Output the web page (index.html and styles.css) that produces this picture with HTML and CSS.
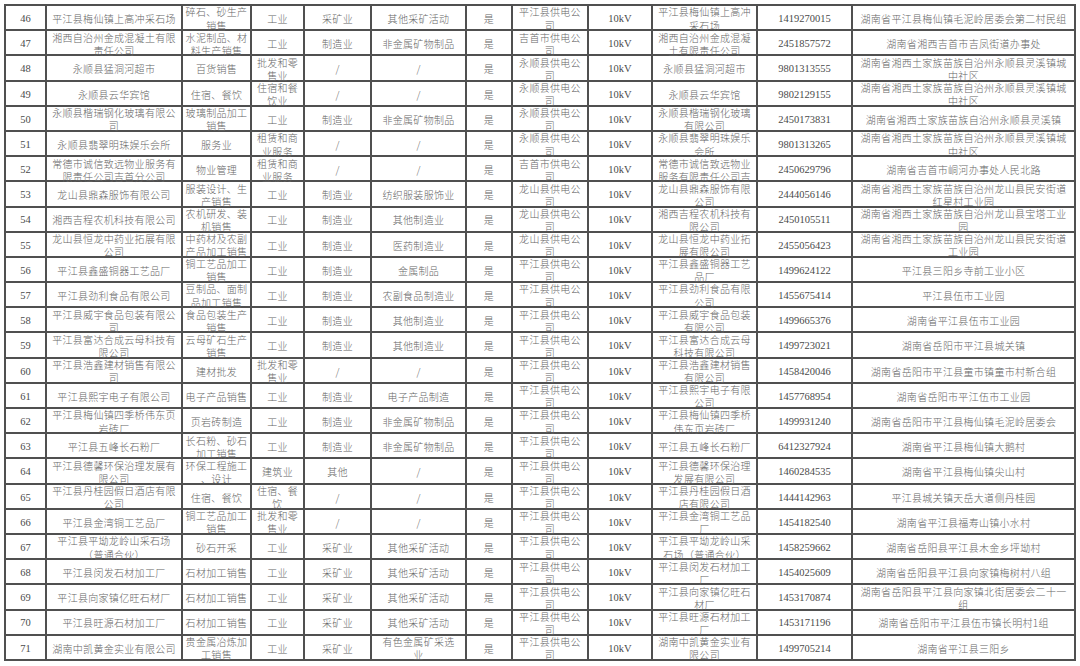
FILE: index.html
```html
<!DOCTYPE html>
<html lang="zh-CN">
<head>
<meta charset="utf-8">
<title>用户名单</title>
<link rel="stylesheet" href="styles.css">
</head>
<body>
<div class="sheet">
<div class="grid">
<div class="n">46</div><div>平江县梅仙镇上高冲采石场</div><div>碎石、砂生产<br>销售</div><div>工业</div><div>采矿业</div><div>其他采矿活动</div><div>是</div><div>平江县供电公<br>司</div><div class="n">10kV</div><div>平江县梅仙镇上高冲<br>采石场</div><div class="n">1419270015</div><div>湖南省平江县梅仙镇毛泥岭居委会第二村民组</div>
<div class="n">47</div><div>湘西自治州金成混凝土有限<br>责任公司</div><div>水泥制品、材<br>料生产销售</div><div>工业</div><div>制造业</div><div>非金属矿物制品</div><div>是</div><div>吉首市供电公<br>司</div><div class="n">10kV</div><div>湘西自治州金成混凝<br>土有限责任公司</div><div class="n">2451857572</div><div>湖南省湘西吉首市吉凤街道办事处</div>
<div class="n">48</div><div>永顺县猛洞河超市</div><div>百货销售</div><div>批发和零<br>售业</div><div>/</div><div>/</div><div>是</div><div>永顺县供电公<br>司</div><div class="n">10kV</div><div>永顺县猛洞河超市</div><div class="n">9801313555</div><div>湖南省湘西土家族苗族自治州永顺县灵溪镇城<br>中社区</div>
<div class="n">49</div><div>永顺县云华宾馆</div><div>住宿、餐饮</div><div>住宿和餐<br>饮业</div><div>/</div><div>/</div><div>是</div><div>永顺县供电公<br>司</div><div class="n">10kV</div><div>永顺县云华宾馆</div><div class="n">9802129155</div><div>湖南省湘西土家族苗族自治州永顺县灵溪镇城<br>中社区</div>
<div class="n">50</div><div>永顺县楷瑞钢化玻璃有限公<br>司</div><div>玻璃制品加工<br>销售</div><div>工业</div><div>制造业</div><div>非金属矿物制品</div><div>是</div><div>永顺县供电公<br>司</div><div class="n">10kV</div><div>永顺县楷瑞钢化玻璃<br>有限公司</div><div class="n">2450173831</div><div>湖南省湘西土家族苗族自治州永顺县灵溪镇</div>
<div class="n">51</div><div>永顺县翡翠明珠娱乐会所</div><div>服务业</div><div>租赁和商<br>业服务</div><div>/</div><div>/</div><div>是</div><div>永顺县供电公<br>司</div><div class="n">10kV</div><div>永顺县翡翠明珠娱乐<br>会所</div><div class="n">9801313265</div><div>湖南省湘西土家族苗族自治州永顺县灵溪镇城<br>中社区</div>
<div class="n">52</div><div>常德市诚信致远物业服务有<br>限责任公司吉首分公司</div><div>物业管理</div><div>租赁和商<br>业服务</div><div>/</div><div>/</div><div>是</div><div>吉首市供电公<br>司</div><div class="n">10kV</div><div>常德市诚信致远物业<br>服务有限责任公司吉</div><div class="n">2450629796</div><div>湖南省吉首市峒河办事处人民北路</div>
<div class="n">53</div><div>龙山县鼎森服饰有限公司</div><div>服装设计、生<br>产销售</div><div>工业</div><div>制造业</div><div>纺织服装服饰业</div><div>是</div><div>龙山县供电公<br>司</div><div class="n">10kV</div><div>龙山县鼎森服饰有限<br>公司</div><div class="n">2444056146</div><div>湖南省湘西土家族苗族自治州龙山县民安街道<br>红星村工业园</div>
<div class="n">54</div><div>湘西吉程农机科技有限公司</div><div>农机研发、装<br>机销售</div><div>工业</div><div>制造业</div><div>其他制造业</div><div>是</div><div>龙山县供电公<br>司</div><div class="n">10kV</div><div>湘西吉程农机科技有<br>限公司</div><div class="n">2450105511</div><div>湖南省湘西土家族苗族自治州龙山县宝塔工业<br>园</div>
<div class="n">55</div><div>龙山县恒龙中药业拓展有限<br>公司</div><div>中药材及农副<br>产品加工销售</div><div>工业</div><div>制造业</div><div>医药制造业</div><div>是</div><div>龙山县供电公<br>司</div><div class="n">10kV</div><div>龙山县恒龙中药业拓<br>展有限公司</div><div class="n">2455056423</div><div>湖南省湘西土家族苗族自治州龙山县民安街道<br>工业园</div>
<div class="n">56</div><div>平江县鑫盛铜器工艺品厂</div><div>铜工艺品加工<br>销售</div><div>工业</div><div>制造业</div><div>金属制品</div><div>是</div><div>平江县供电公<br>司</div><div class="n">10kV</div><div>平江县鑫盛铜器工艺<br>品厂</div><div class="n">1499624122</div><div>平江县三阳乡寺前工业小区</div>
<div class="n">57</div><div>平江县劲利食品有限公司</div><div>豆制品、面制<br>品加工销售</div><div>工业</div><div>制造业</div><div>农副食品制造业</div><div>是</div><div>平江县供电公<br>司</div><div class="n">10kV</div><div>平江县劲利食品有限<br>公司</div><div class="n">1455675414</div><div>平江县伍市工业园</div>
<div class="n">58</div><div>平江县威宇食品包装有限公<br>司</div><div>食品包装生产<br>销售</div><div>工业</div><div>制造业</div><div>其他制造业</div><div>是</div><div>平江县供电公<br>司</div><div class="n">10kV</div><div>平江县威宇食品包装<br>有限公司</div><div class="n">1499665376</div><div>湖南省平江县伍市工业园</div>
<div class="n">59</div><div>平江县富达合成云母科技有<br>限公司</div><div>云母矿石生产<br>销售</div><div>工业</div><div>制造业</div><div>其他制造业</div><div>是</div><div>平江县供电公<br>司</div><div class="n">10kV</div><div>平江县富达合成云母<br>科技有限公司</div><div class="n">1499723021</div><div>湖南省岳阳市平江县城关镇</div>
<div class="n">60</div><div>平江县浩鑫建材销售有限公<br>司</div><div>建材批发</div><div>批发和零<br>售业</div><div>/</div><div>/</div><div>是</div><div>平江县供电公<br>司</div><div class="n">10kV</div><div>平江县浩鑫建材销售<br>有限公司</div><div class="n">1458420046</div><div>湖南省岳阳市平江县童市镇童市村新合组</div>
<div class="n">61</div><div>平江县熙宇电子有限公司</div><div>电子产品销售</div><div>工业</div><div>制造业</div><div>电子产品制造</div><div>是</div><div>平江县供电公<br>司</div><div class="n">10kV</div><div>平江县熙宇电子有限<br>公司</div><div class="n">1457768954</div><div>湖南省岳阳市平江伍市工业园</div>
<div class="n">62</div><div>平江县梅仙镇四季桥伟东页<br>岩砖厂</div><div>页岩砖制造</div><div>工业</div><div>制造业</div><div>非金属矿物制品</div><div>是</div><div>平江县供电公<br>司</div><div class="n">10kV</div><div>平江县梅仙镇四季桥<br>伟东页岩砖厂</div><div class="n">1499931240</div><div>湖南省岳阳市平江县梅仙镇毛泥岭居委会</div>
<div class="n">63</div><div>平江县五峰长石粉厂</div><div>长石粉、砂石<br>加工销售</div><div>工业</div><div>制造业</div><div>非金属矿物制品</div><div>是</div><div>平江县供电公<br>司</div><div class="n">10kV</div><div>平江县五峰长石粉厂</div><div class="n">6412327924</div><div>湖南省平江县梅仙镇大鹅村</div>
<div class="n">64</div><div>平江县德馨环保治理发展有<br>限公司</div><div>环保工程施工<br>、设计</div><div>建筑业</div><div>其他</div><div>/</div><div>是</div><div>平江县供电公<br>司</div><div class="n">10kV</div><div>平江县德馨环保治理<br>发展有限公司</div><div class="n">1460284535</div><div>湖南省平江县梅仙镇尖山村</div>
<div class="n">65</div><div>平江县丹桂园假日酒店有限<br>公司</div><div>住宿、餐饮</div><div>住宿、餐<br>饮</div><div>/</div><div>/</div><div>是</div><div>平江县供电公<br>司</div><div class="n">10kV</div><div>平江县丹桂园假日酒<br>店有限公司</div><div class="n">1444142963</div><div>平江县城关镇天岳大道侧丹桂园</div>
<div class="n">66</div><div>平江县金湾铜工艺品厂</div><div>铜工艺品加工<br>销售</div><div>批发和零<br>售业</div><div>/</div><div>/</div><div>是</div><div>平江县供电公<br>司</div><div class="n">10kV</div><div>平江县金湾铜工艺品<br>厂</div><div class="n">1454182540</div><div>湖南省平江县福寿山镇小水村</div>
<div class="n">67</div><div>平江县平坳龙岭山采石场<br>（普通合伙）</div><div>砂石开采</div><div>工业</div><div>采矿业</div><div>其他采矿活动</div><div>是</div><div>平江县供电公<br>司</div><div class="n">10kV</div><div>平江县平坳龙岭山采<br>石场（普通合伙）</div><div class="n">1458259662</div><div>湖南省岳阳县平江县木金乡坪坳村</div>
<div class="n">68</div><div>平江县闵发石材加工厂</div><div>石材加工销售</div><div>工业</div><div>采矿业</div><div>其他采矿活动</div><div>是</div><div>平江县供电公<br>司</div><div class="n">10kV</div><div>平江县闵发石材加工<br>厂</div><div class="n">1454025609</div><div>湖南省岳阳县平江县向家镇梅树村八组</div>
<div class="n">69</div><div>平江县向家镇亿旺石材厂</div><div>石材加工销售</div><div>工业</div><div>采矿业</div><div>其他采矿活动</div><div>是</div><div>平江县供电公<br>司</div><div class="n">10kV</div><div>平江县向家镇亿旺石<br>材厂</div><div class="n">1453170874</div><div>湖南省岳阳县平江县向家镇北街居委会二十一<br>组</div>
<div class="n">70</div><div>平江县旺源石材加工厂</div><div>石材加工销售</div><div>工业</div><div>采矿业</div><div>其他采矿活动</div><div>是</div><div>平江县供电公<br>司</div><div class="n">10kV</div><div>平江县旺源石材加工<br>厂</div><div class="n">1453171196</div><div>湖南省岳阳市平江县伍市镇长明村1组</div>
<div class="n">71</div><div>湖南中凯黄金实业有限公司</div><div>贵金属冶炼加<br>工销售</div><div>工业</div><div>采矿业</div><div>有色金属矿采选<br>业</div><div>是</div><div>平江县供电公<br>司</div><div class="n">10kV</div><div>湖南中凯黄金实业有<br>限公司</div><div class="n">1499705214</div><div>湖南省平江县三阳乡</div>
</div>
</div>
</body>
</html>
```
FILE: styles.css
```css
html, body {
  margin: 0;
  padding: 0;
  background: #ffffff;
}

.sheet {
  padding: 4px 0 0 4px;
}

.grid {
  display: grid;
  grid-template-columns: 41px 136px 69px 53px 67px 95px 46px 76px 64px 105px 95px 223px;
  grid-auto-rows: 25.19px;
  width: max-content;
  border-top: 2px solid #505050;
  border-left: 2px solid #505050;
  font-family: "Noto Sans CJK SC", "Noto Sans CJK JP", sans-serif;
  font-weight: 300;
  font-size: 10px;
  letter-spacing: 0.3px;
  color: #666666;
}

.grid > div {
  box-sizing: border-box;
  border-right: 2px solid #505050;
  border-bottom: 2px solid #505050;
  display: flex;
  align-items: center;
  justify-content: center;
  text-align: center;
  white-space: nowrap;
  line-height: 13.2px;
  padding-top: 2px;
  overflow: visible;
}

.grid > .n {
  font-family: "Liberation Serif", "Times New Roman", serif;
  font-weight: 400;
  font-size: 10.5px;
  letter-spacing: 0;
  color: #4a4a4a;
}
```
